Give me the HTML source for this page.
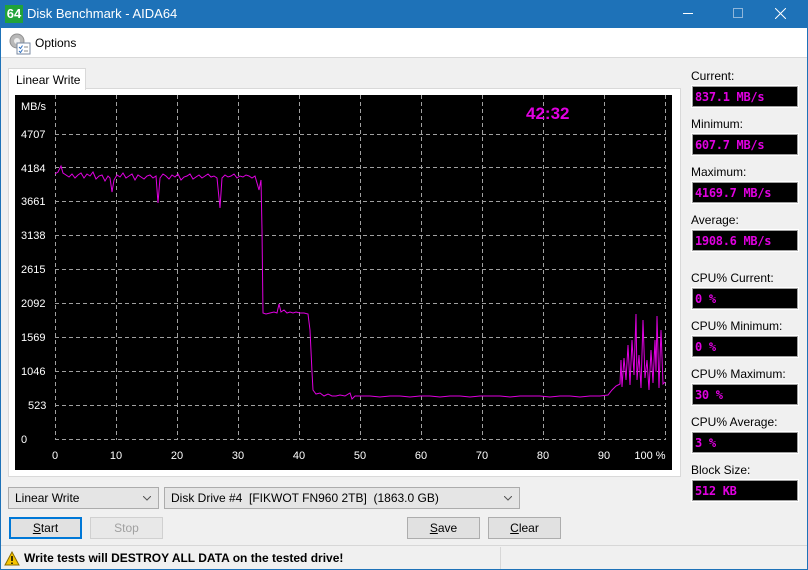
<!DOCTYPE html>
<html><head><meta charset="utf-8"><style>
*{margin:0;padding:0;box-sizing:border-box}
body{width:808px;height:570px;background:#f0f0f0;font-family:"Liberation Sans",sans-serif;font-size:12px;color:#000;position:relative;overflow:hidden}
.abs{position:absolute}
#win{position:absolute;left:0;top:0;width:808px;height:570px;border:1px solid #1e72b8;border-top:none}
#title{left:0;top:0;width:808px;height:28px;background:#1e72b8;color:#fff;font-size:13px}
#menu{left:1px;top:28px;width:806px;height:30px;background:#fff;border-bottom:1px solid #d9d9d9}
.lbl{position:absolute;left:691px;font-size:12px}
.box{position:absolute;left:692px;width:106px;height:21px;background:#000;border:1px solid #a0a0a0;outline:1px solid #fff;color:#e000e0;font-family:"DejaVu Sans Mono","Liberation Mono",monospace;font-weight:bold;font-size:12px;padding:3px 0 0 2px;letter-spacing:-0.3px}
.btn{position:absolute;height:22px;width:73px;background:#e1e1e1;border:1px solid #adadad;text-align:center;line-height:20px;font-size:12px}
.combo{position:absolute;height:22px;background:#e5e5e5;border:1px solid #acacac;line-height:20px;padding-left:6px;font-size:12px}
.combo svg{position:absolute;right:7px;top:8px}
</style></head><body>
<div id="win"></div>
<div id="title" class="abs">
 <div class="abs" style="left:5px;top:5px;width:18px;height:18px;background:#21a33a;color:#fff;font-weight:bold;font-size:13px;line-height:18px;text-align:center">64</div>
 <div class="abs" style="left:27px;top:6px">Disk Benchmark - AIDA64</div>
 <div class="abs" style="left:683px;top:13px;width:10px;height:1px;background:#fff"></div>
 <div class="abs" style="left:733px;top:8px;width:10px;height:10px;border:1px solid #8fb6da"></div>
 <svg class="abs" style="left:775px;top:8px" width="11" height="11"><path d="M0 0L11 11M11 0L0 11" stroke="#fff" stroke-width="1"/></svg>
</div>
<div id="menu" class="abs">
 <svg class="abs" style="left:7px;top:4px" width="24" height="24"><circle cx="9" cy="9" r="7" fill="#b8b8b8" stroke="#909090"/><circle cx="9" cy="9" r="3" fill="#eee"/><rect x="9" y="11" width="13" height="11" fill="#fff" stroke="#7a8aa0"/><path d="M11 15l1.5 1.5 2-3M11 19l1.5 1.5 2-3" stroke="#3070c0" fill="none"/><path d="M16 15h4M16 19h4" stroke="#888"/></svg>
 <div class="abs" style="left:34px;top:8px">Options</div>
</div>
<div class="abs" style="left:8px;top:88px;width:673px;height:389px;background:#fff;border:1px solid #d9d9d9"></div>
<div class="abs" style="left:8px;top:68px;width:78px;height:22px;background:#fff;border:1px solid #d9d9d9;border-bottom:none;padding:4px 0 0 7px">Linear Write</div>
<svg class="abs" style="left:15px;top:95px" width="657" height="375" viewBox="15 95 657 375">
<rect x="15" y="95" width="657" height="375" fill="#000"/>
<g stroke="#a0a0a0" stroke-dasharray="4,3" stroke-width="1" fill="none">
<path d="M55.5 95V440M116.5 95V440M177.5 95V440M238.5 95V440M299.5 95V440M360.5 95V440M421.5 95V440M482.5 95V440M543.5 95V440M604.5 95V440M665.5 95V440"/>
<path d="M55 134.5H666M55 167.5H666M55 201.5H666M55 235.5H666M55 269.5H666M55 303.5H666M55 337.5H666M55 371.5H666M55 405.5H666M55 439.5H666"/>
</g>
<g fill="#fff" font-size="11" font-family="Liberation Sans,sans-serif">
<text x="21" y="110">MB/s</text>
<text x="21" y="138">4707</text><text x="21" y="172">4184</text><text x="21" y="205">3661</text><text x="21" y="239">3138</text><text x="21" y="273">2615</text><text x="21" y="307">2092</text><text x="21" y="341">1569</text><text x="21" y="375">1046</text><text x="28" y="409">523</text><text x="21" y="443">0</text>
<g text-anchor="middle"><text x="55" y="459">0</text><text x="116" y="459">10</text><text x="177" y="459">20</text><text x="238" y="459">30</text><text x="299" y="459">40</text><text x="360" y="459">50</text><text x="421" y="459">60</text><text x="482" y="459">70</text><text x="543" y="459">80</text><text x="604" y="459">90</text><text x="650" y="459">100 %</text></g>
</g>
<text x="526" y="119" fill="#e000e0" font-size="17" font-weight="bold" font-family="Liberation Sans,sans-serif">42:32</text>
<polyline fill="none" stroke="#e000e0" stroke-width="1" points="55,174 58,172 61,166 63,173 66,175 69,177 72,174 75,178 78,175 81,173 84,178 87,174 90,176 93,172 96,179 99,176 102,175 105,181 108,176 110,178 112,192 114,180 117,175 120,177 123,173 126,178 129,176 132,174 135,180 138,175 141,177 144,179 147,176 150,175 153,178 156,176 158,203 160,178 163,174 166,176 169,179 172,175 175,177 178,174 181,180 184,177 187,176 190,174 193,179 196,177 199,175 202,178 205,176 208,174 211,177 214,176 217,178 220,208 222,178 225,175 228,177 231,176 234,174 237,178 240,176 243,177 246,175 249,176 252,178 255,176 257,183 259,190 261,180 262,230 263,313 266,314 270,313 274,312 277,313 279,304 281,312 284,310 287,313 290,312 293,313 296,312 300,313 304,313 308,314 310,330 312,372 313,390 316,394 320,393 324,396 328,394 332,396 336,396 340,395 345,396 350,393 352,399 355,396 360,396 370,396 380,397 390,396 400,396 410,397 420,396 430,396 440,397 450,396 460,396 470,397 480,396 490,396 500,396 510,397 520,396 530,396 540,396 550,397 560,396 570,396 580,397 590,396 600,396 608,395 612,390 616,386 620,384 621,360 622,387 624,358 626,380 628,345 630,385 632,340 634,375 636,314 637,380 639,355 641,388 643,320 645,378 647,360 649,390 651,350 653,383 655,340 656,372 657,316 659,388 661,330 663,384 665,382"/>
</svg>
<div class="lbl" style="top:69px">Current:</div><div class="box" style="top:86px">837.1 MB/s</div>
<div class="lbl" style="top:117px">Minimum:</div><div class="box" style="top:134px">607.7 MB/s</div>
<div class="lbl" style="top:165px">Maximum:</div><div class="box" style="top:182px">4169.7 MB/s</div>
<div class="lbl" style="top:213px">Average:</div><div class="box" style="top:230px">1908.6 MB/s</div>
<div class="lbl" style="top:271px">CPU% Current:</div><div class="box" style="top:288px">0 %</div>
<div class="lbl" style="top:319px">CPU% Minimum:</div><div class="box" style="top:336px">0 %</div>
<div class="lbl" style="top:367px">CPU% Maximum:</div><div class="box" style="top:384px">30 %</div>
<div class="lbl" style="top:415px">CPU% Average:</div><div class="box" style="top:432px">3 %</div>
<div class="lbl" style="top:463px">Block Size:</div><div class="box" style="top:480px">512 KB</div>
<div class="combo" style="left:8px;top:487px;width:151px">Linear Write<svg width="8" height="5"><path d="M0 0L4 4L8 0" stroke="#555" fill="none"/></svg></div>
<div class="combo" style="left:164px;top:487px;width:356px">Disk Drive #4&nbsp; [FIKWOT FN960 2TB]&nbsp; (1863.0 GB)<svg width="8" height="5"><path d="M0 0L4 4L8 0" stroke="#555" fill="none"/></svg></div>
<div class="btn" style="left:9px;top:517px;border:2px solid #0078d7;line-height:18px"><u>S</u>tart</div>
<div class="btn" style="left:90px;top:517px;color:#a0a0a0;border-color:#d0d0d0;background:#e8e8e8">Stop</div>
<div class="btn" style="left:407px;top:517px"><u>S</u>ave</div>
<div class="btn" style="left:488px;top:517px"><u>C</u>lear</div>
<div class="abs" style="left:1px;top:545px;width:806px;height:1px;background:#d7d7d7"></div>
<div class="abs" style="left:500px;top:547px;width:1px;height:22px;background:#d7d7d7"></div>
<svg class="abs" style="left:4px;top:551px" width="16" height="15"><path d="M8 1L15 14H1Z" fill="#f5c400" stroke="#8a6d00"/><path d="M8 5v5M8 11.5v1.5" stroke="#000" stroke-width="1.5"/></svg>
<div class="abs" style="left:24px;top:551px;font-weight:bold;font-size:12px">Write tests will DESTROY ALL DATA on the tested drive!</div>
</body></html>
